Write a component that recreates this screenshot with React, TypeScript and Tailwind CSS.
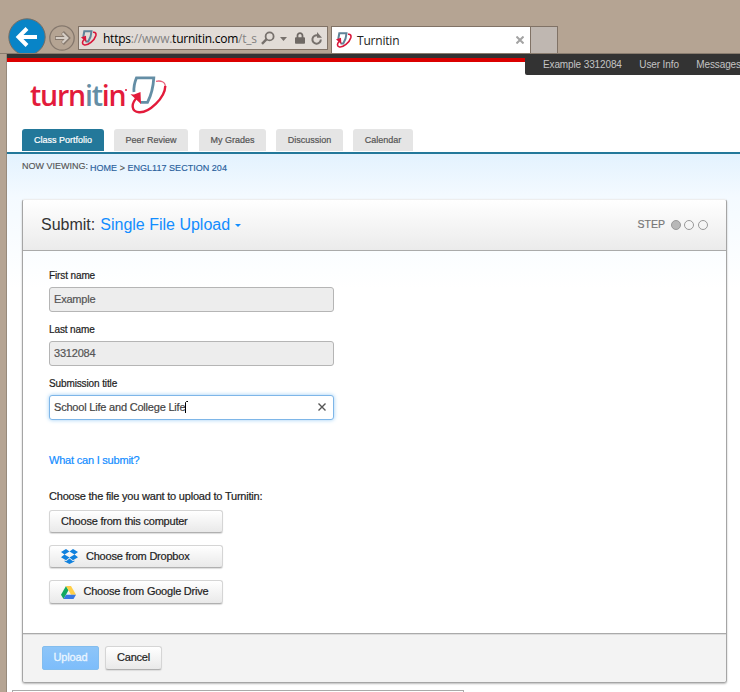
import React, { useState } from "react";
import { FaLock } from "react-icons/fa";

const TurnitinMark: React.FC<{ className?: string }> = ({ className }) => (
  <svg viewBox="0 0 37 38" fill="none" className={className}>
    <path
      d="M4 16C3.500 11 4.800 6 6.500 1.800H23.800C23.300 10 21.800 18 17.500 26.300H10.500"
      stroke="#648ea5"
      strokeWidth="2.800"
    />
    <path
      d="M26 5.300C30 4.500 36 5 35.300 12"
      stroke="#e9607a"
      strokeWidth="1.300"
    />
    <path
      d="M35.300 10C35 22 19 37 9 36.200C1.500 35.600 .5 28 7 21.500"
      stroke="#e31b3b"
      strokeWidth="2.400"
    />
    <path d="M.5 18.300L4 18.600 10.500 16 11 28z" fill="#e31b3b" />
  </svg>
);

// Heavier strokes than the header mark so it stays readable at 16px
const Favicon: React.FC = () => (
  <svg viewBox="0 0 16 16" fill="none" className="size-4 shrink-0">
    <path d="M2.300 7L3.300 1.300h7.200C10.300 5.500 9.300 8.500 7.300 11.500H4.500" stroke="#5f8398" strokeWidth="2" />
    <path
      d="M12 2.300C14.500 2 15.400 3.200 14.800 5.800C13.500 10.500 7 15.600 3.500 15C1 14.500.8 12 3 9.500"
      stroke="#d8173a"
      strokeWidth="1.600"
    />
    <path d="M0 7.300l5-1.500.4 6.500z" fill="#d8173a" />
  </svg>
);

const DropboxIcon: React.FC = () => (
  <svg viewBox="0 0 17 15" className="h-[15px] w-[17px] shrink-0" fill="#1081de">
    <path d="M5 0l3.500 2.500L3.500 5.500 0 3zM12 0L8.500 2.500l5 3L17 3zM0 8.300l5 3 3.500-2.800-5-3zM17 8.300l-5 3-3.500-2.800 5-3zM8.500 9.500l-3.400 2.800-1.500-.9v1l4.900 2.600 4.900-2.600v-1l-1.500.9z" />
  </svg>
);

const DriveIcon: React.FC = () => (
  <svg viewBox="0 0 15 13" className="h-[13px] w-[15px] shrink-0">
    <path d="M5 0L0 8.800 2.500 13 7.500 4.300z" fill="#11a861" />
    <path d="M5 0h5l5 8.800h-5z" fill="#ffcf48" />
    <path d="M5 8.800h10L12.500 13h-10z" fill="#3777e3" />
  </svg>
);

const BrowserBar: React.FC = () => (
  <div className="flex h-[54px] items-end border-b border-[#897c6f] bg-[#b5a493] font-['Open_Sans',sans-serif]">
    <div className="ml-2 h-[35px] w-[38px] overflow-hidden">
      <svg viewBox="0 0 38 38" className="h-[38px] w-[38px]" fill="none">
        <circle cx="19" cy="19" r="18.200" fill="#0884c7" stroke="#756d64" />
        <path
          d="M29 19H11M19 10.500L10.500 19l8.500 8.500"
          stroke="white"
          strokeWidth="4"
        />
      </svg>
    </div>
    <svg viewBox="0 0 26 26" className="mb-[2px] ml-[3px] size-[26px]" fill="none">
      <circle cx="13" cy="13" r="12.200" stroke="#85786d" strokeWidth="1.300" />
      <path
        d="M6 13h12M13.500 7.500L19 13l-5.500 5.500"
        stroke="#85786d"
        strokeWidth="4"
      />
      <path
        d="M6.800 13h11.500M13.500 8.200l4.800 4.800-4.800 4.800"
        stroke="#d6cec6"
        strokeWidth="2.200"
      />
    </svg>
    <div className="mb-[3px] ml-[3px] flex h-6 w-[250px] items-center border border-[#807266] bg-[#e2dcd7] pl-[2px]">
      <Favicon />
      <div className="ml-[6px] w-[154px] shrink-0 pt-px text-[12px] tracking-[-0.24px] whitespace-nowrap text-[#828282]">
        <span className="text-black">https</span>://www.
        <span className="text-black">turnitin.com</span>/t_s
      </div>
      <svg viewBox="0 0 14 14" className="ml-1 size-[14px] shrink-0" fill="none" stroke="#77716d">
        <circle cx="8.600" cy="5.400" r="4" strokeWidth="1.800" />
        <path d="M5.600 8.200L1 12.800" strokeWidth="2.400" />
      </svg>
      <svg viewBox="0 0 7 4" className="mt-px ml-[5px] h-1 w-[7px] shrink-0">
        <path d="M0 0h7L3.500 4z" fill="#77716d" />
      </svg>
      <FaLock className="ml-2 h-3 w-[10px] shrink-0 text-[#6f6965]" />
      <svg viewBox="0 0 12 13" className="ml-[6px] h-[13px] w-3 shrink-0" fill="none">
        <path d="M9.800 7.500A4.200 4.200 0 1 1 6.500 3.400" stroke="#77716d" strokeWidth="2" />
        <path d="M6 0v5.800h5z" fill="#77716d" />
      </svg>
    </div>
    <div className="ml-[3px] flex h-[27px] w-[200px] items-center border border-b-0 border-[#807266] bg-white pr-[6px] pl-[4px]">
      <Favicon />
      <span className="ml-[5px] pt-[2px] text-[12px] tracking-[-0.2px] text-[#222]">
        Turnitin
      </span>
      <svg viewBox="0 0 8 8" className="ml-auto size-2" stroke="#a3a3a3" strokeWidth="2">
        <path d="M.5.5l7 7M7.500.5l-7 7" />
      </svg>
    </div>
    <div className="h-[27px] w-[27px] border border-b-0 border-l-0 border-[#807266] bg-[#bfb7b1]" />
  </div>
);

const tabs = [
  { label: "Class Portfolio", style: "w-[82px] bg-[#23789a] text-white mr-[10px]" },
  { label: "Peer Review", style: "w-[74px] bg-[#e5e5e5] text-[#555] mr-[11px]" },
  { label: "My Grades", style: "w-[67px] bg-[#e5e5e5] text-[#555] mr-[10px]" },
  { label: "Discussion", style: "w-[67px] bg-[#e5e5e5] text-[#555] mr-[10px]" },
  { label: "Calendar", style: "w-[60px] bg-[#e5e5e5] text-[#555]" },
];

const SiteHeader: React.FC = () => (
  <>
    <div className="flex h-[21px] bg-white">
      <div className="h-2 w-[518px] shrink-0 border-t-4 border-b-4 border-t-[#333] border-b-[#db0000]" />
      <div className="flex h-[21px] flex-1 items-center gap-[17.500px] rounded-bl-xs bg-[#333] pl-[18px] text-[10px] tracking-[-0.12px] whitespace-nowrap text-[#c4c4c4]">
        <span>Example 3312084</span>
        <span>User Info</span>
        <span>Messages</span>
      </div>
    </div>
    <div className="flex h-[54px] items-start bg-white pl-[23px]">
      <div className="w-[95px] pt-px font-['Open_Sans',sans-serif] text-[28.500px] leading-[38px] font-semibold tracking-[-1.2px] whitespace-nowrap text-[#e31b3b]">
        turn<span className="text-[#648ea5]">it</span>in
      </div>
      <span className="mt-[14px] size-[2px] rounded-full bg-[#e31b3b]" />
      <TurnitinMark className="mt-[1px] ml-[3px] h-[38px] w-[37px]" />
    </div>
    <div className="flex h-[25px] items-start border-b-2 border-[#23789a] bg-white pl-[15px] text-[9px] [-webkit-text-stroke:0.2px]">
      {tabs.map((tab) => (
        <button
          key={tab.label}
          className={`h-[22px] rounded-t-[3px] pt-px whitespace-nowrap ${tab.style}`}
        >
          {tab.label}
        </button>
      ))}
    </div>
  </>
);

const fieldBase =
  "h-[25px] w-[285px] rounded-[3px] border px-1 text-[11px] tracking-[-0.2px]";
const buttonBase =
  "flex items-center rounded-[3px] border border-[#d5d5d5] border-b-[#b0b0b0] bg-linear-to-b from-white to-[#e9e9e9] text-[11px] tracking-[-0.22px] text-[#222] shadow-[0_1px_1px_#ddd] [-webkit-text-stroke:0.2px]";

const App: React.FC = () => {
  const [title, setTitle] = useState("School Life and College Life");

  return (
    <div className="h-[692px] w-[740px] overflow-hidden bg-[#b5a493] font-['Liberation_Sans',Arial,sans-serif]">
      <BrowserBar />
      <div className="ml-[6px] h-[638px] border-l border-[#978a7c] bg-white">
        <SiteHeader />

        <div className="h-[538px] bg-linear-to-b from-[#e3f2fe] via-[#f4faff] via-8% to-white to-25% pl-[15px]">
          <div className="flex h-[45px] items-start gap-[2px] text-[9px] leading-[11px] whitespace-nowrap text-[#555] [-webkit-text-stroke:0.15px]">
            <span className="pt-[7px]">NOW VIEWING:</span>
            <span className="pt-[9px] tracking-[0.03px]">
              <a className="text-[#29609c]">HOME</a> &gt;{" "}
              <a className="text-[#29609c]">ENGL117 SECTION 204</a>
            </span>
          </div>

          <div className="h-[484px] w-[705px] overflow-hidden rounded-[3px] border border-[#a5a5a5] border-t-[#eee] shadow-[0_1px_2px_#bbb]">
            <div className="flex h-[51px] items-center justify-between border-b border-[#aaa] bg-linear-to-b from-white to-[#ebebeb] pr-[18px] pl-[18px]">
              <h1 className="flex items-center text-[16px] text-[#333]">
                Submit:
                <span className="ml-[5px] text-[#128dff]">Single File Upload</span>
                <svg viewBox="0 0 6 3" className="mt-[1px] ml-[5px] h-[3px] w-[6px]">
                  <path d="M0 0h6L3 3z" fill="#128dff" />
                </svg>
              </h1>
              <div className="flex items-center text-[10.500px] text-[#777] [-webkit-text-stroke:0.2px]">
                STEP
                <span className="ml-[6px] size-[10px] rounded-full border border-[#999] bg-[#b8b8b8]" />
                <span className="ml-[3px] size-[10px] rounded-full border border-[#999]" />
                <span className="ml-[4px] size-[10px] rounded-full border border-[#999]" />
              </div>
            </div>

            <div className="h-[382px] pl-[26px] text-[#222] [-webkit-text-stroke:0.2px]">
              <div className="flex flex-col pt-[18px] text-[10px] leading-[14px] tracking-[-0.12px]">
                <label>First name</label>
                <input
                  readOnly
                  value="Example"
                  className={`${fieldBase} mt-[4px] mb-[11px] border-[#b5b5b5] bg-[#ededed] pb-[2px] text-[#555]`}
                />
                <label>Last name</label>
                <input
                  readOnly
                  value="3312084"
                  className={`${fieldBase} mt-[4px] mb-[11px] border-[#b5b5b5] bg-[#ededed] pb-[2px] text-[#555]`}
                />
                <label>Submission title</label>
                <div
                  className={`${fieldBase} mt-[4px] flex items-center border-[#7eb6e8] bg-white text-[#444] shadow-[0_0_4px_#9bcdf5]`}
                >
                  <input
                    value={title}
                    onChange={(e) => setTitle(e.target.value)}
                    className="w-[131px] pb-[2px] outline-none"
                  />
                  <svg viewBox="0 0 3 12" className="mb-px h-3 w-[3px]" stroke="black" fill="none">
                    <path d="M.5 12V1.500L1.500.5H3" />
                  </svg>
                  <svg
                    viewBox="0 0 8 8"
                    className="mr-[3px] mb-[2px] ml-auto size-2"
                    stroke="#555"
                    strokeWidth="1.400"
                    onClick={() => setTitle("")}
                  >
                    <path d="M.5.5l7 7M7.500.5l-7 7" />
                  </svg>
                </div>
              </div>

              <div className="pt-[33px] text-[11px] leading-[14px] tracking-[-0.21px]">
                <a className="block text-[#128dff]">What can I submit?</a>
                <p className="mt-[22px]">
                  Choose the file you want to upload to Turnitin:
                </p>
              </div>
              <div className="mt-[7px] flex flex-col gap-[12px]">
                <button className={`${buttonBase} h-[23px] w-[174px] pl-[11px]`}>
                  Choose from this computer
                </button>
                <button className={`${buttonBase} h-[23px] w-[174px] gap-[8px] pl-[11px]`}>
                  <DropboxIcon />
                  Choose from Dropbox
                </button>
                <button className={`${buttonBase} h-[24px] w-[174px] gap-[7.500px] pl-[11px]`}>
                  <DriveIcon />
                  <span className="pb-px">Choose from Google Drive</span>
                </button>
              </div>
            </div>

            <div className="flex h-[50px] items-start gap-[6px] border-t border-[#aaa] bg-[#f3f3f3] pt-[12px] pl-[19px] shadow-[inset_0_1px_0_#ddd]">
              <button className="h-6 w-[57px] rounded-[2px] border border-[#83bdee] bg-linear-to-b from-[#8dc5f8] to-[#7dbdfb] pb-px text-[11px] tracking-[-0.15px] text-[#eaf5ff] [-webkit-text-stroke:0.3px]">
                Upload
              </button>
              <button className={`${buttonBase} h-6 w-[57px] justify-center pb-px`}>
                Cancel
              </button>
            </div>
          </div>

          <div className="mt-[7px] -ml-[10px] h-2 w-[452px] border border-[#aaa] bg-white" />
        </div>
      </div>
    </div>
  );
};

export default App;
